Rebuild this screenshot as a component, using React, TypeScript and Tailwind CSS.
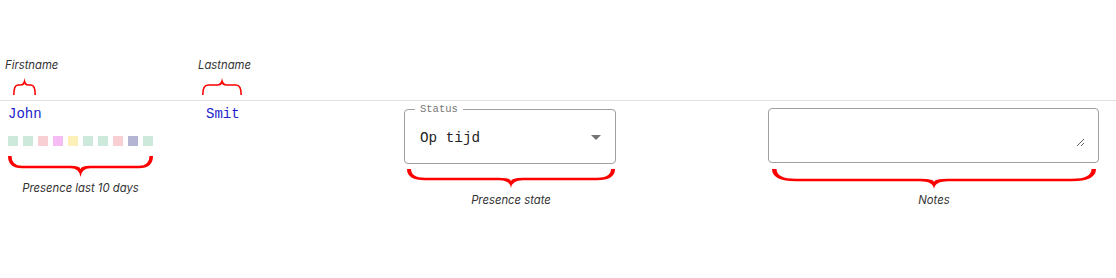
import React from 'react';

interface BraceProps {
  width: number;
  height: number;
  mid: number; // distance of the long stroke from the tips
  line?: number;
  tip?: number;
  curve?: number;
  cusp?: number;
  up?: boolean;
}

// red curly brace lying on its side; by default the cusp points down
const Brace = ({ width: W, height: H, mid: m, line = 2.5, tip = 4, curve = 18, cusp = 12, up = false }: BraceProps) => {
  const lo = m + line / 2;
  const hi = m - line / 2;
  const c = W / 2;
  const d = [
    `M 0 0`,
    `Q 0 ${lo} ${curve} ${lo}`,
    `L ${c - cusp} ${lo}`,
    `Q ${c - 1} ${lo} ${c} ${H}`,
    `Q ${c + 1} ${lo} ${c + cusp} ${lo}`,
    `L ${W - curve} ${lo}`,
    `Q ${W} ${lo} ${W} 0`,
    `L ${W - tip} 0`,
    `Q ${W - tip} ${hi} ${W - curve} ${hi}`,
    `L ${c + cusp} ${hi}`,
    `Q ${c} ${hi} ${c} ${lo + 1}`,
    `Q ${c} ${hi} ${c - cusp} ${hi}`,
    `L ${curve} ${hi}`,
    `Q ${tip} ${hi} ${tip} 0`,
    'Z',
  ].join(' ');
  return (
    <svg width={W} height={H} viewBox={`0 0 ${W} ${H}`} className="block overflow-visible">
      <path d={d} fill="#ff0000" transform={up ? `translate(0 ${H}) scale(1 -1)` : undefined} />
    </svg>
  );
};

const presence = ['#cde9dc', '#cde9dc', '#f8cfd3', '#f6bdf4', '#fcf0b8', '#cde9dc', '#cde9dc', '#f8cfd3', '#b4b5d3', '#cde9dc'];

const Note = ({ children }: { children: React.ReactNode }) => (
  <div className="font-['Inter',sans-serif] italic text-[11.3px] leading-[14px] text-[#333] whitespace-nowrap">{children}</div>
);

export default function App() {
  return (
    <div className="w-[1116px] h-[278px] bg-white overflow-hidden">
      {/* column captions */}
      <div className="flex h-[100px] pt-[58px]">
        <div className="w-[196px]">
          <div className="ml-[5px]"><Note>Firstname</Note></div>
          <div className="ml-[13px] mt-[6px]">
            <Brace width={23} height={17} mid={10} line={1.4} tip={1.6} curve={5} cusp={4} up />
          </div>
        </div>
        <div className="w-[208px]">
          <div className="ml-[2px]"><Note>Lastname</Note></div>
          <div className="ml-[6px] mt-[6px]">
            <Brace width={40} height={17} mid={10} line={1.4} tip={1.6} curve={6} cusp={5} up />
          </div>
        </div>
      </div>

      <div className="border-t border-[#e0e0e0] flex">
        <div className="w-[196px] pl-[8px] pt-[3px]">
          <div className="font-['Liberation_Mono',monospace] text-[14px] leading-[20px] text-[#2222cc]">John</div>
          <div className="flex gap-[5px] mt-[12px]">
            {presence.map((c, i) => (
              <div key={i} className="w-[10px] h-[10px]" style={{ backgroundColor: c }} />
            ))}
          </div>
          <div className="mt-[10px] w-[145px]">
            <Brace width={145} height={21} mid={11} tip={3.5} curve={14} cusp={10} />
            <div className="mt-[4px] flex justify-center"><Note>Presence last 10 days</Note></div>
          </div>
        </div>

        <div className="w-[208px] pl-[10px] pt-[3px]">
          <div className="font-['Liberation_Mono',monospace] text-[14px] leading-[20px] text-[#2222cc]">Smit</div>
        </div>

        <div className="w-[212px]">
          <div className="relative mt-[8px] h-[55px] border border-[#a0a0a0] rounded-[4px] flex items-center pl-[15px] pr-[7px]">
            <span className="absolute left-[10px] -top-[7px] px-[5px] bg-white font-['Liberation_Mono',monospace] text-[10.5px] leading-[12px] text-[#777]">
              Status
            </span>
            <span className="flex-1 pt-[2px] font-['Liberation_Mono',monospace] text-[14.3px] leading-[20px] text-[#222]">Op tijd</span>
            <svg width="24" height="24" viewBox="0 0 24 24">
              <path d="M7 10l5 5 5-5z" fill="#757575" />
            </svg>
          </div>
          <div className="mt-[5px] ml-[3px] w-[208px]">
            <Brace width={208} height={19} mid={10} tip={4} curve={18} cusp={12} />
            <div className="mt-[5px] flex justify-center"><Note>Presence state</Note></div>
          </div>
        </div>

        <div className="w-[152px]" />

        <div className="w-[331px]">
          <div className="mt-[7px] h-[55px] border border-[#a0a0a0] rounded-[4px] pt-[15px] pl-[15px] pr-[13px] pb-[15px]">
            <textarea className="block w-full h-[23px] outline-none border-0 p-0 bg-transparent" />
          </div>
          <div className="mt-[6px] ml-[4px] w-[324px]">
            <Brace width={324} height={20} mid={11} tip={4.5} curve={24} cusp={14} />
            <div className="mt-[4px] flex justify-center"><Note>Notes</Note></div>
          </div>
        </div>
      </div>
    </div>
  );
}
